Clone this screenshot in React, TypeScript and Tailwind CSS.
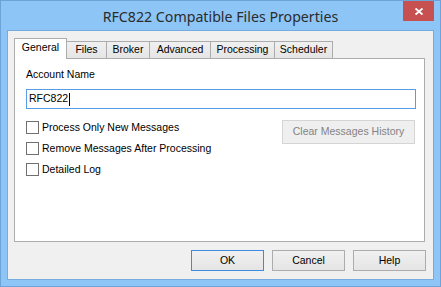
import { useState } from 'react';

const TABS = [
  { label: 'General', width: 'w-[53px]' },
  { label: 'Files', width: 'w-[41px]' },
  { label: 'Broker', width: 'w-[44px]' },
  { label: 'Advanced', width: 'w-[62px]' },
  { label: 'Processing', width: 'w-[65px]' },
  { label: 'Scheduler', width: 'w-[59px]' },
];

const OPTIONS = ['Process Only New Messages', 'Remove Messages After Processing', 'Detailed Log'];

function CheckRow({ label }: { label: string }) {
  return (
    <label className="flex items-center h-[13px] gap-[3px]">
      <span className="w-[13px] h-[13px] border border-[#707070] bg-white shrink-0" />
      <span className="leading-[13px]">{label}</span>
    </label>
  );
}

function DialogButton({ label, focused }: { label: string; focused?: boolean }) {
  return (
    <button
      className={`w-[73px] h-[21px] border bg-gradient-to-b from-[#f0f0f0] to-[#e5e5e5] text-black leading-none ${
        focused ? 'border-[#3c8be0]' : 'border-[#acacac]'
      }`}
    >
      {label}
    </button>
  );
}

export default function App() {
  const [tab, setTab] = useState('General');

  return (
    <div
      className="w-[441px] h-[287px] bg-[#8dc5f6] border border-[#6ea3d9] flex flex-col px-[6px] pb-[6px] text-[10.5px] text-black"
      style={{ fontFamily: '"Liberation Sans", Arial, sans-serif' }}
    >
      {/* Title bar */}
      <div className="h-[29px] grid grid-cols-[31px_1fr_31px] items-start">
        <div />
        <div
          className="h-[29px] flex items-center justify-center text-[14.2px] text-[#2b2b2b] pt-[2px]"
          style={{ fontFamily: '"Noto Sans", "Open Sans", sans-serif' }}
        >
          RFC822 Compatible Files Properties
        </div>
        <button className="w-[31px] h-[20px] bg-[#c75050] flex items-center justify-center pt-[1px]">
          <svg width="8" height="7" viewBox="0 0 8 7">
            <path d="M0.5 0.5 L7.5 6.5 M7.5 0.5 L0.5 6.5" stroke="white" strokeWidth="1.9" />
          </svg>
        </button>
      </div>

      {/* Client area */}
      <div className="h-[250px] border border-[#76abe0] bg-[#f0f0f0] flex flex-col pt-[7px] pl-[6px] pr-[7px]">
        {/* Tab strip */}
        <div className="h-[20px] flex items-end">
          {TABS.map((t, i) => {
            const active = t.label === tab;
            return (
              <button
                key={t.label}
                onClick={() => setTab(t.label)}
                className={`${t.width} ${i > 0 ? '-ml-px' : ''} flex items-center justify-center border border-b-0 border-[#acacac] ${
                  active
                    ? 'h-[21px] self-start bg-white relative z-10 pb-[3px]'
                    : 'h-[17px] bg-gradient-to-b from-[#f0f0f0] to-[#e5e5e5]'
                }`}
              >
                {t.label}
              </button>
            );
          })}
        </div>

        {/* Tab page */}
        <div className="h-[184px] mr-px border border-[#acacac] bg-white pt-[9px] pl-[11px] pr-[8px] flex flex-col">
          <div className="h-[13px] leading-[13px]">Account Name</div>
          <div className="mt-[8px] h-[20px] border border-[#569de5] flex items-center pl-[2px]">
            <span>RFC822</span>
            <span className="w-px h-[13px] bg-black ml-[1px]" />
          </div>
          <div className="mt-[11px] flex justify-between">
            <div className="flex flex-col gap-[8px] pt-[1px]">
              {OPTIONS.map((o) => (
                <CheckRow key={o} label={o} />
              ))}
            </div>
            <button
              disabled
              className="w-[133px] h-[24px] mr-px border border-[#d5d5d5] bg-[#efefef] text-[#838383]"
            >
              Clear Messages History
            </button>
          </div>
        </div>

        {/* Dialog buttons */}
        <div className="mt-[8px] flex justify-end gap-[8px]">
          <DialogButton label="OK" focused />
          <DialogButton label="Cancel" />
          <DialogButton label="Help" />
        </div>
      </div>
    </div>
  );
}
